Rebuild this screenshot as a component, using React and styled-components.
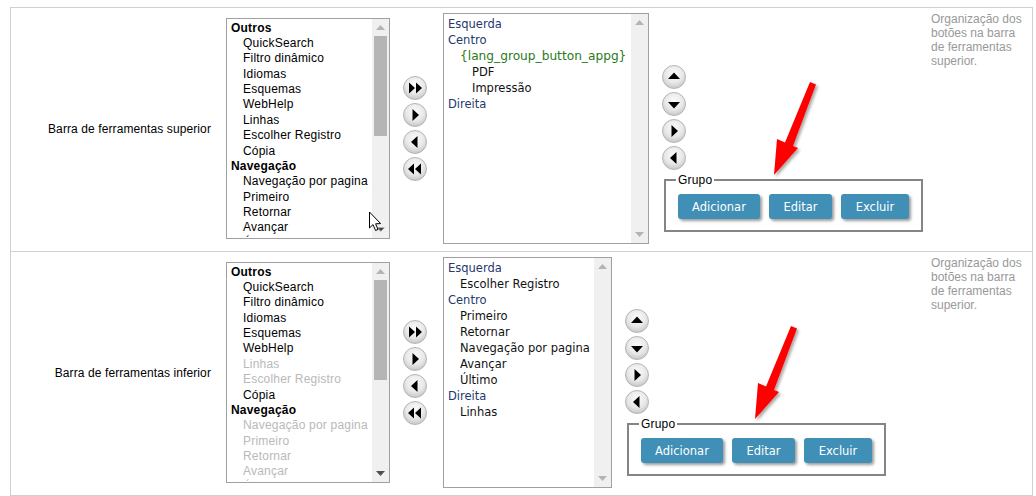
import React from 'react'
import styled, { createGlobalStyle } from 'styled-components'

const available = [
  { text: 'Outros', group: true },
  { text: 'QuickSearch' },
  { text: 'Filtro dinâmico' },
  { text: 'Idiomas' },
  { text: 'Esquemas' },
  { text: 'WebHelp' },
  { text: 'Linhas', off: 'bottom' },
  { text: 'Escolher Registro', off: 'bottom' },
  { text: 'Cópia' },
  { text: 'Navegação', group: true },
  { text: 'Navegação por pagina', off: 'bottom' },
  { text: 'Primeiro', off: 'bottom' },
  { text: 'Retornar', off: 'bottom' },
  { text: 'Avançar', off: 'bottom' },
  { text: 'Último', off: 'bottom' },
]

const topPlaced = [
  { text: 'Esquerda', level: 0 },
  { text: 'Centro', level: 0 },
  { text: '{lang_group_button_appg}', level: 1, tag: true },
  { text: 'PDF', level: 2 },
  { text: 'Impressão', level: 2 },
  { text: 'Direita', level: 0 },
]

const bottomPlaced = [
  { text: 'Esquerda', level: 0 },
  { text: 'Escolher Registro', level: 1 },
  { text: 'Centro', level: 0 },
  { text: 'Primeiro', level: 1 },
  { text: 'Retornar', level: 1 },
  { text: 'Navegação por pagina', level: 1 },
  { text: 'Avançar', level: 1 },
  { text: 'Último', level: 1 },
  { text: 'Direita', level: 0 },
  { text: 'Linhas', level: 1 },
]

const glyphs = {
  up: 'M12 7.5 L18 14 L6 14 Z',
  down: 'M12 16.5 L18 10 L6 10 Z',
  right: 'M16 12 L9.5 6 L9.5 18 Z',
  left: 'M8 12 L14.5 6 L14.5 18 Z',
  last: 'M12 12 L6 6.5 L6 17.5 Z M19 12 L13 6.5 L13 17.5 Z',
  first: 'M5 12 L11 6.5 L11 17.5 Z M12 12 L18 6.5 L18 17.5 Z',
}

function RoundButton({ dir }) {
  return (
    <Round>
      <svg width="24" height="24" viewBox="0 0 24 24">
        <path d={glyphs[dir]} fill="#000" />
      </svg>
    </Round>
  )
}

function RedArrow({ left }) {
  return (
    <ArrowMark $left={left} width="60" height="110" viewBox="0 0 60 110">
      <defs>
        <filter id="arrowShadow" x="-30%" y="-30%" width="160%" height="160%">
          <feDropShadow dx="2" dy="2" stdDeviation="1.6" floodColor="#000" floodOpacity="0.35" />
        </filter>
      </defs>
      <path
        d="M44 1 L50 3.5 L27 65 L32 67 L8 94 L11 58 L19 61.5 Z"
        fill="#fe0000"
        filter="url(#arrowShadow)"
      />
    </ArrowMark>
  )
}

function Cursor() {
  return (
    <CursorMark width="20" height="24" viewBox="0 0 20 24">
      <path d="M1.5 1 L1.5 17 L5 13.6 L7.6 19.5 L10 18.4 L7.6 12.8 L12.6 12.6 Z" fill="#fff" stroke="#000" strokeWidth="1" />
      <path d="M10 17 L16 17 L13 20 Z" fill="#444" />
    </CursorMark>
  )
}

function Scrollbar({ thumb, darkDown }) {
  return (
    <Track>
      <Arrow viewBox="0 0 9 5" width="9" height="5"><path d="M4.5 0 L9 5 L0 5 Z" fill="#b4b4b4" /></Arrow>
      {thumb ? <Thumb /> : <Spacer />}
      <Arrow viewBox="0 0 9 5" width="9" height="5">
        <path d="M0 0 L9 0 L4.5 5 Z" fill={darkDown ? '#505050' : '#b4b4b4'} />
      </Arrow>
    </Track>
  )
}

function Toolbar({ label, usedOff, placed, placedWidth, arrowLeft, cursor }) {
  return (
    <Row>
      <Label>{label}</Label>
      <AvailableList>
        <AvailableItems>
          {available.map(item => (
            <AvailableItem key={item.text} $group={item.group} $off={usedOff && item.off}>
              {item.text}
            </AvailableItem>
          ))}
        </AvailableItems>
        <Scrollbar thumb darkDown={!cursor} />
        {cursor && <Cursor />}
      </AvailableList>
      <MoveButtons>
        <RoundButton dir="last" />
        <RoundButton dir="right" />
        <RoundButton dir="left" />
        <RoundButton dir="first" />
      </MoveButtons>
      <PlacedList $width={placedWidth}>
        <PlacedItems>
          {placed.map(item => (
            <PlacedItem key={item.text} $level={item.level} $tag={item.tag}>{item.text}</PlacedItem>
          ))}
        </PlacedItems>
        <Scrollbar />
      </PlacedList>
      <OrderColumn>
        <OrderButtons>
          <RoundButton dir="up" />
          <RoundButton dir="down" />
          <RoundButton dir="right" />
          <RoundButton dir="left" />
        </OrderButtons>
        <GroupBox>
          <GroupLegend>Grupo</GroupLegend>
          <ActionButton $width={82}>Adicionar</ActionButton>
          <ActionButton $width={63}>Editar</ActionButton>
          <ActionButton $width={68}>Excluir</ActionButton>
        </GroupBox>
        <RedArrow left={arrowLeft} />
      </OrderColumn>
      <Help>Organização dos botões na barra de ferramentas superior.</Help>
    </Row>
  )
}

export default function App() {
  return (
    <>
      <GlobalStyle />
      <Page>
        <Toolbar
          label="Barra de ferramentas superior"
          placed={topPlaced}
          placedWidth={206}
          arrowLeft={104}
          cursor
        />
        <Toolbar
          label="Barra de ferramentas inferior"
          usedOff
          placed={bottomPlaced}
          placedWidth={169}
          arrowLeft={122}
        />
      </Page>
    </>
  )
}

const GlobalStyle = createGlobalStyle`
  html, body {
    margin: 0;
    background: #fff;
  }
  body {
    font-family: "Liberation Sans", Arial, sans-serif;
    font-size: 12px;
    color: #000;
  }
`
const Page = styled.div`
  width: 1033px;
  height: 496px;
  padding: 7px 0 0 10px;
  box-sizing: border-box;
  overflow: hidden;
`
const Row = styled.div`
  display: flex;
  align-items: center;
  height: 244px;
  box-sizing: border-box;
  padding-bottom: 2px;
  border: 1px solid #d0d0d0;
  border-bottom: 0;
  &:last-child {
    height: 245px;
    border-bottom: 1px solid #d0d0d0;
  }
`
const Label = styled.div`
  flex: 0 0 200px;
  margin-right: 15px;
  text-align: right;
  letter-spacing: 0.1px;
`
const AvailableList = styled.div`
  position: relative;
  display: flex;
  flex: 0 0 164px;
  height: 221px;
  box-sizing: border-box;
  border: 1px solid #a0a0a0;
  overflow: hidden;
`
const AvailableItems = styled.div`
  flex: 1;
  min-width: 0;
  padding-top: 1.5px;
  overflow: hidden;
  white-space: nowrap;
  letter-spacing: 0.2px;
`
const AvailableItem = styled.div`
  height: 15.38px;
  line-height: 15.38px;
  padding-left: ${props => (props.$group ? '4px' : '16px')};
  font-weight: ${props => (props.$group ? 'bold' : 'normal')};
  color: ${props => (props.$off ? '#b9b9b9' : '#000')};
`
const Track = styled.div`
  display: flex;
  flex: 0 0 17px;
  flex-direction: column;
  align-items: center;
  padding: 6px 0;
  box-sizing: border-box;
  background: #f0f0f0;
`
const Arrow = styled.svg`
  flex: none;
  display: block;
`
const Thumb = styled.div`
  width: 13px;
  height: 100px;
  margin: 6px 0 auto;
  background: #b5b5b5;
`
const Spacer = styled.div`
  flex: 1;
`
const CursorMark = styled.svg`
  position: absolute;
  left: 141px;
  top: 192px;
`
const MoveButtons = styled.div`
  display: flex;
  flex: none;
  flex-direction: column;
  gap: 3px;
  margin: 0 16px 0 13px;
`
const Round = styled.div`
  width: 24px;
  height: 24px;
  box-sizing: border-box;
  border-radius: 50%;
  border: 1px solid #b4b4b4;
  background: radial-gradient(circle at 50% 35%, #fbfbfb 0%, #e8e8e8 50%, #bebebe 90%, #aaa 100%);
  svg {
    display: block;
    margin: -1px;
  }
`
const PlacedList = styled.div`
  display: flex;
  flex: 0 0 ${props => props.$width}px;
  height: 231px;
  box-sizing: border-box;
  border: 1px solid #a0a0a0;
`
const PlacedItems = styled.div`
  flex: 1;
  min-width: 0;
  padding-top: 2px;
  overflow: hidden;
  white-space: nowrap;
`
const PlacedItem = styled.div`
  height: 16px;
  line-height: 16px;
  padding-left: ${props => 4 + props.$level * 12}px;
  font-family: "DejaVu Sans", sans-serif;
  font-size: ${props => (props.$tag ? '12.2px' : '11.5px')};
  color: ${props => (props.$tag ? '#2a7a1c' : props.$level === 0 ? '#26386e' : '#111')};
`
const OrderColumn = styled.div`
  position: relative;
  flex: none;
  align-self: flex-start;
  margin: 57px 0 0 13px;
`
const OrderButtons = styled.div`
  display: flex;
  flex-direction: column;
  gap: 3px;
`
const GroupBox = styled.fieldset`
  display: flex;
  gap: 9px;
  margin: 4px 0 0 2px;
  padding: 8px 12px 11px;
  border: 2px solid #858585;
  min-inline-size: 0;
`
const GroupLegend = styled.legend`
  padding: 0 2px;
  margin-left: -2px;
  line-height: 12px;
  letter-spacing: 0.2px;
  color: #000;
`
const ActionButton = styled.button`
  width: ${props => props.$width}px;
  height: 25px;
  padding: 0;
  border: 0;
  border-radius: 3px;
  background: #3f8fb6;
  box-shadow: 2px 2px 3px #9c9c9c;
  color: #fff;
  font-family: "DejaVu Sans", sans-serif;
  font-size: 11.5px;
`
const ArrowMark = styled.svg`
  position: absolute;
  left: ${props => props.$left}px;
  top: 16px;
  pointer-events: none;
`
const Help = styled.div`
  flex: 0 0 101px;
  box-sizing: border-box;
  align-self: flex-start;
  margin: 4px 0 0 auto;
  padding-right: 4px;
  line-height: 14px;
  color: #999;
`
